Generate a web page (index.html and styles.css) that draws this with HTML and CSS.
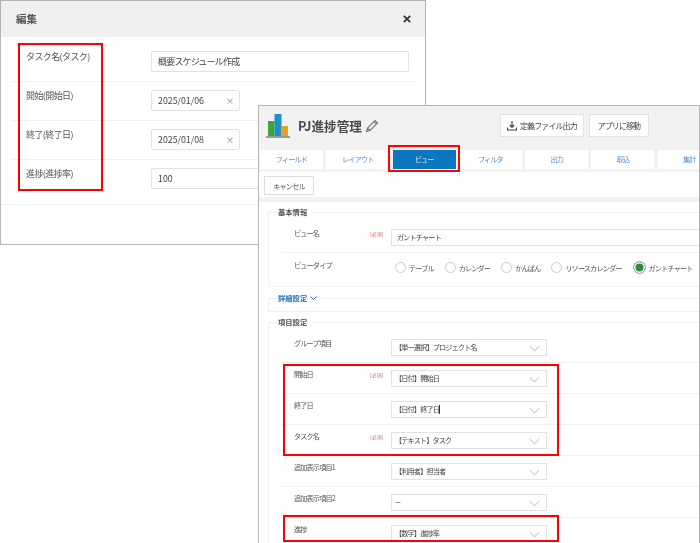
FILE: index.html
```html
<!DOCTYPE html>
<html lang="ja">
<head>
    <meta charset="UTF-8">
    <title>PJ進捗管理</title>
    <link rel="stylesheet" href="styles.css">
</head>
<body>
    <!-- 編集ダイアログ -->
    <div class="window edit-window">
        <div class="edit-head">
            <span class="edit-title">編集</span>
            <svg class="edit-close" width="8" height="8" viewBox="0 0 10 10"><path d="M1 1 9 9M9 1 1 9" stroke="#333" stroke-width="2.2"/></svg>
        </div>
        <div class="edit-body">
            <div class="edit-row">
                <span class="edit-label">タスク名(タスク)</span>
                <div class="edit-input edit-wide">概要スケジュール作成</div>
            </div>
            <div class="edit-row">
                <span class="edit-label">開始(開始日)</span>
                <div class="edit-input edit-date">2025/01/06<span class="edit-clear">×</span></div>
            </div>
            <div class="edit-row">
                <span class="edit-label">終了(終了日)</span>
                <div class="edit-input edit-date">2025/01/08<span class="edit-clear">×</span></div>
            </div>
            <div class="edit-row">
                <span class="edit-label">進捗(進捗率)</span>
                <div class="edit-input edit-wide edit-num">100</div>
            </div>
        </div>
    </div>
    <div class="mark mark-left"></div>

    <!-- アプリ設定 -->
    <div class="window app-window">
        <div class="app-head">
            <div class="app-top">
                <svg class="app-logo" width="24" height="25" viewBox="0 0 24 25">
                    <rect x="2" y="8" width="6.5" height="15" fill="#3aa53a"/>
                    <rect x="8.5" y="1" width="7" height="22" fill="#1e8fc8"/>
                    <rect x="15.5" y="13" width="6.5" height="10" fill="#e8a020"/>
                    <rect x="0" y="23" width="24" height="2" fill="#9a9a9a"/>
                </svg>
                <span class="app-name">PJ進捗管理</span>
                <svg class="app-pencil" width="14" height="14" viewBox="0 0 14 14"><path d="M1.5 12.5 2.5 9 10 1.5 12.5 4 5 11.5ZM2.5 9 5 11.5M9 2.5 11.5 5" fill="none" stroke="#777" stroke-width="1.1"/></svg>
                <button class="head-btn btn-export">
                    <svg width="10" height="10" viewBox="0 0 10 10"><path d="M5 0V6M2.8 4 5 6.4 7.2 4M.5 6.5V9H9.5V6.5" fill="none" stroke="#444" stroke-width="1.2"/></svg>
                    定義ファイル出力
                </button>
                <button class="head-btn btn-move">アプリに移動</button>
            </div>
            <div class="tabs">
                <div class="tab">フィールド</div>
                <div class="tab">レイアウト</div>
                <div class="tab active">ビュー</div>
                <div class="tab">フィルタ</div>
                <div class="tab">出力</div>
                <div class="tab">取込</div>
                <div class="tab">集計</div>
            </div>
        </div>
        <div class="actions"><button class="cancel">キャンセル</button></div>

        <div class="content">
            <div class="group group-basic">
                <div class="group-title">基本情報</div>
                <div class="row row-first">
                    <span class="row-label">ビュー名</span>
                    <span class="req">[必須]</span>
                    <div class="field field-full">ガントチャート</div>
                </div>
                <div class="row row-radios">
                    <span class="row-label">ビュータイプ</span>
                    <span class="req"></span>
                    <div class="radios">
                        <span class="radio"><i></i>テーブル</span>
                        <span class="radio"><i></i>カレンダー</span>
                        <span class="radio"><i></i>かんばん</span>
                        <span class="radio"><i></i>リソースカレンダー</span>
                        <span class="radio on"><i></i>ガントチャート</span>
                    </div>
                </div>
            </div>

            <div class="group group-detail">
                <div class="group-title link">詳細設定
                    <svg width="7" height="5" viewBox="0 0 7 5"><path d="M.5.5 3.5 3.5 6.5.5" fill="none" stroke="#2a6fb5" stroke-width="1"/></svg>
                </div>
            </div>

            <div class="group group-items">
                <div class="group-title">項目設定</div>
                <div class="row row-first">
                    <span class="row-label">グループ項目</span><span class="req"></span>
                    <div class="field select">【単一選択】プロジェクト名</div>
                </div>
                <div class="row">
                    <span class="row-label">開始日</span><span class="req">[必須]</span>
                    <div class="field select">【日付】開始日</div>
                </div>
                <div class="row">
                    <span class="row-label">終了日</span><span class="req"></span>
                    <div class="field select">【日付】終了日<span class="caret"></span></div>
                </div>
                <div class="row">
                    <span class="row-label">タスク名</span><span class="req">[必須]</span>
                    <div class="field select">【テキスト】タスク</div>
                </div>
                <div class="row">
                    <span class="row-label">追加表示項目1</span><span class="req"></span>
                    <div class="field select">【利用者】担当者</div>
                </div>
                <div class="row">
                    <span class="row-label">追加表示項目2</span><span class="req"></span>
                    <div class="field select">---</div>
                </div>
                <div class="row">
                    <span class="row-label">進捗</span><span class="req"></span>
                    <div class="field select">【数字】進捗率</div>
                </div>
            </div>
        </div>
    </div>
    <div class="mark mark-tab"></div>
    <div class="mark mark-fields"></div>
    <div class="mark mark-progress"></div>
</body>
</html>
```

FILE: styles.css
```css
* {
    box-sizing: border-box;
}
html, body {
    height: 100%;
}
body {
    margin: 0;
    background: #fff;
    font-family: "Noto Sans CJK JP", "Liberation Sans", sans-serif;
    color: #444;
    overflow: hidden;
    position: relative;
    filter: blur(0.3px);
}
.window {
    position: absolute;
    background: #fff;
    border: 1px solid #b5b5b5;
}

/* 編集ダイアログ */
.edit-window {
    left: 0;
    top: 0;
    width: 426px;
    height: 245px;
}
.edit-head {
    height: 36px;
    background: #f0f0f0;
    display: flex;
    align-items: center;
    justify-content: space-between;
    padding: 0 14px 2px 15px;
}
.edit-title {
    font-size: 10.5px;
    font-weight: 700;
    color: #555;
}
.edit-close {
    margin-top: 2px;
}
.edit-body {
    padding: 0 10px;
}
.edit-row {
    height: 39px;
    display: flex;
    align-items: flex-start;
    border-bottom: 1px solid #f1f1f1;
    padding-top: 8px;
}
.edit-row:first-child {
    height: 45px;
    padding-top: 14px;
}
.edit-row:last-child {
    height: 45px;
    margin: 0 -10px;
    padding-left: 10px;
}
.edit-label {
    flex: none;
    width: 140px;
    margin-top: -1px;
    padding-left: 15px;
    font-size: 9px;
    letter-spacing: -0.6px;
    line-height: 14px;
    color: #555;
}
.edit-input {
    height: 21px;
    border: 1px solid #e2e2e2;
    border-radius: 2px;
    font-size: 9px;
    letter-spacing: -0.8px;
    line-height: 19px;
    padding-left: 6px;
    color: #444;
}
.edit-wide {
    width: 258px;
}
.edit-date, .edit-num {
    font-size: 8.8px;
    letter-spacing: 0;
}
.edit-date {
    width: 89px;
    display: flex;
    justify-content: space-between;
    padding-right: 5px;
}
.edit-clear {
    color: #777;
    font-size: 8px;
}

/* アプリ設定 */
.app-window {
    left: 258px;
    top: 105px;
    width: 442px;
    height: 438px;
    border-bottom: 0;
    overflow: hidden;
}
.app-head {
    height: 66px;
    background: #f2f2f2;
}
.app-top {
    height: 44px;
    display: flex;
    align-items: center;
    padding: 0 0 5px 7px;
}
.app-logo {
    margin-right: 8px;
}
.app-name {
    font-size: 12.6px;
    font-weight: 700;
    color: #4a4a4a;
    margin-right: 3px;
}
.app-pencil {
    margin-right: 121px;
}
.head-btn {
    height: 23px;
    margin-right: 5px;
    padding: 0;
    background: #fff;
    border: 1px solid #e2e2e2;
    font-family: inherit;
    font-size: 8px;
    letter-spacing: -0.9px;
    color: #444;
    display: flex;
    align-items: center;
    justify-content: center;
    gap: 3px;
    white-space: nowrap;
}
.btn-export {
    width: 84px;
}
.btn-move {
    width: 60px;
}
.tabs {
    display: flex;
    gap: 3.3px;
    padding-left: 1px;
}
.tab {
    flex: 0 0 63px;
    height: 19px;
    background: #fff;
    color: #5a8fc8;
    font-size: 7.2px;
    letter-spacing: -0.9px;
    line-height: 18px;
    text-align: center;
}
.tab.active {
    background: #0a78bf;
    color: #d5e8f5;
}
.actions {
    display: flex;
    align-items: flex-start;
    height: 30px;
    padding: 4px 5px;
    border-bottom: 5px solid #f2f2f2;
}
.cancel {
    width: 50px;
    height: 19px;
    padding: 0;
    background: #fff;
    border: 1px solid #ddd;
    font-family: inherit;
    font-size: 7.2px;
    letter-spacing: -0.9px;
    color: #555;
}
.content {
    padding-left: 9px;
}
.group {
    position: relative;
    border: 1px solid #f0f0f0;
    border-right: 0;
    margin-top: 10px;
    padding-left: 13px;
}
.group-basic {
    height: 75px;
}
.group-title {
    position: absolute;
    top: -7px;
    left: 8px;
    padding: 0 5px 0 1px;
    background: #fff;
    font-size: 7.3px;
    line-height: 13px;
    font-weight: 700;
    color: #555;
}
.group-title.link {
    color: #2a6fb5;
    display: flex;
    align-items: center;
    gap: 3px;
}
.group-detail {
    height: 14px;
    margin-top: 11px;
}
.group-items {
    border-bottom: 0;
}
.row {
    height: 31px;
    display: flex;
    align-items: flex-start;
    padding-top: 7px;
    border-bottom: 1px solid #f0f0f0;
}
.row-first {
    height: 40px;
    padding-top: 16px;
}
.row-radios {
    border-bottom: 0;
    padding-top: 8px;
}
.row-label {
    flex: none;
    width: 88px;
    padding-left: 12px;
    font-size: 7.2px;
    letter-spacing: -0.9px;
    line-height: 9px;
    color: #555;
    white-space: nowrap;
}
.req {
    flex: none;
    width: 21px;
    font-size: 5px;
    line-height: 9px;
    color: #c77;
}
.field {
    height: 17px;
    border: 1px solid #e2e2e2;
    font-size: 7.2px;
    letter-spacing: -0.9px;
    line-height: 14px;
    color: #444;
    padding-left: 5px;
}
.field-full {
    flex: 1;
    border-right: 0;
}
.select {
    position: relative;
    width: 156px;
    padding-left: 3px;
}
.select::after {
    content: "";
    position: absolute;
    right: 8px;
    top: 3px;
    width: 6px;
    height: 6px;
    border-right: 1px solid #ccc;
    border-bottom: 1px solid #ccc;
    transform: rotate(45deg);
}
.caret {
    display: inline-block;
    width: 1px;
    height: 9px;
    background: #333;
    vertical-align: -2px;
}
.radios {
    display: flex;
    margin-left: 4px;
    white-space: nowrap;
}
.radio {
    display: flex;
    align-items: center;
    gap: 3px;
    margin-right: 11px;
    font-size: 7.2px;
    letter-spacing: -0.9px;
    line-height: 12px;
    color: #555;
}
.radio i {
    width: 11px;
    height: 11px;
    border: 1px solid #ccc;
    border-radius: 50%;
    background: #fff;
}
.radio.on i {
    width: 13px;
    height: 13px;
    background: #2e8b3d;
    box-shadow: inset 0 0 0 1.5px #fff;
    border-color: #aaa;
}

/* 赤枠 */
.mark {
    position: absolute;
    border: 2px solid #f00;
}
.mark-left {
    left: 18px;
    top: 43px;
    width: 85px;
    height: 148px;
}
.mark-tab {
    left: 388px;
    top: 145px;
    width: 72px;
    height: 27px;
}
.mark-fields {
    left: 283px;
    top: 364px;
    width: 276px;
    height: 92px;
}
.mark-progress {
    left: 283px;
    top: 515px;
    width: 276px;
    height: 27px;
}
```
